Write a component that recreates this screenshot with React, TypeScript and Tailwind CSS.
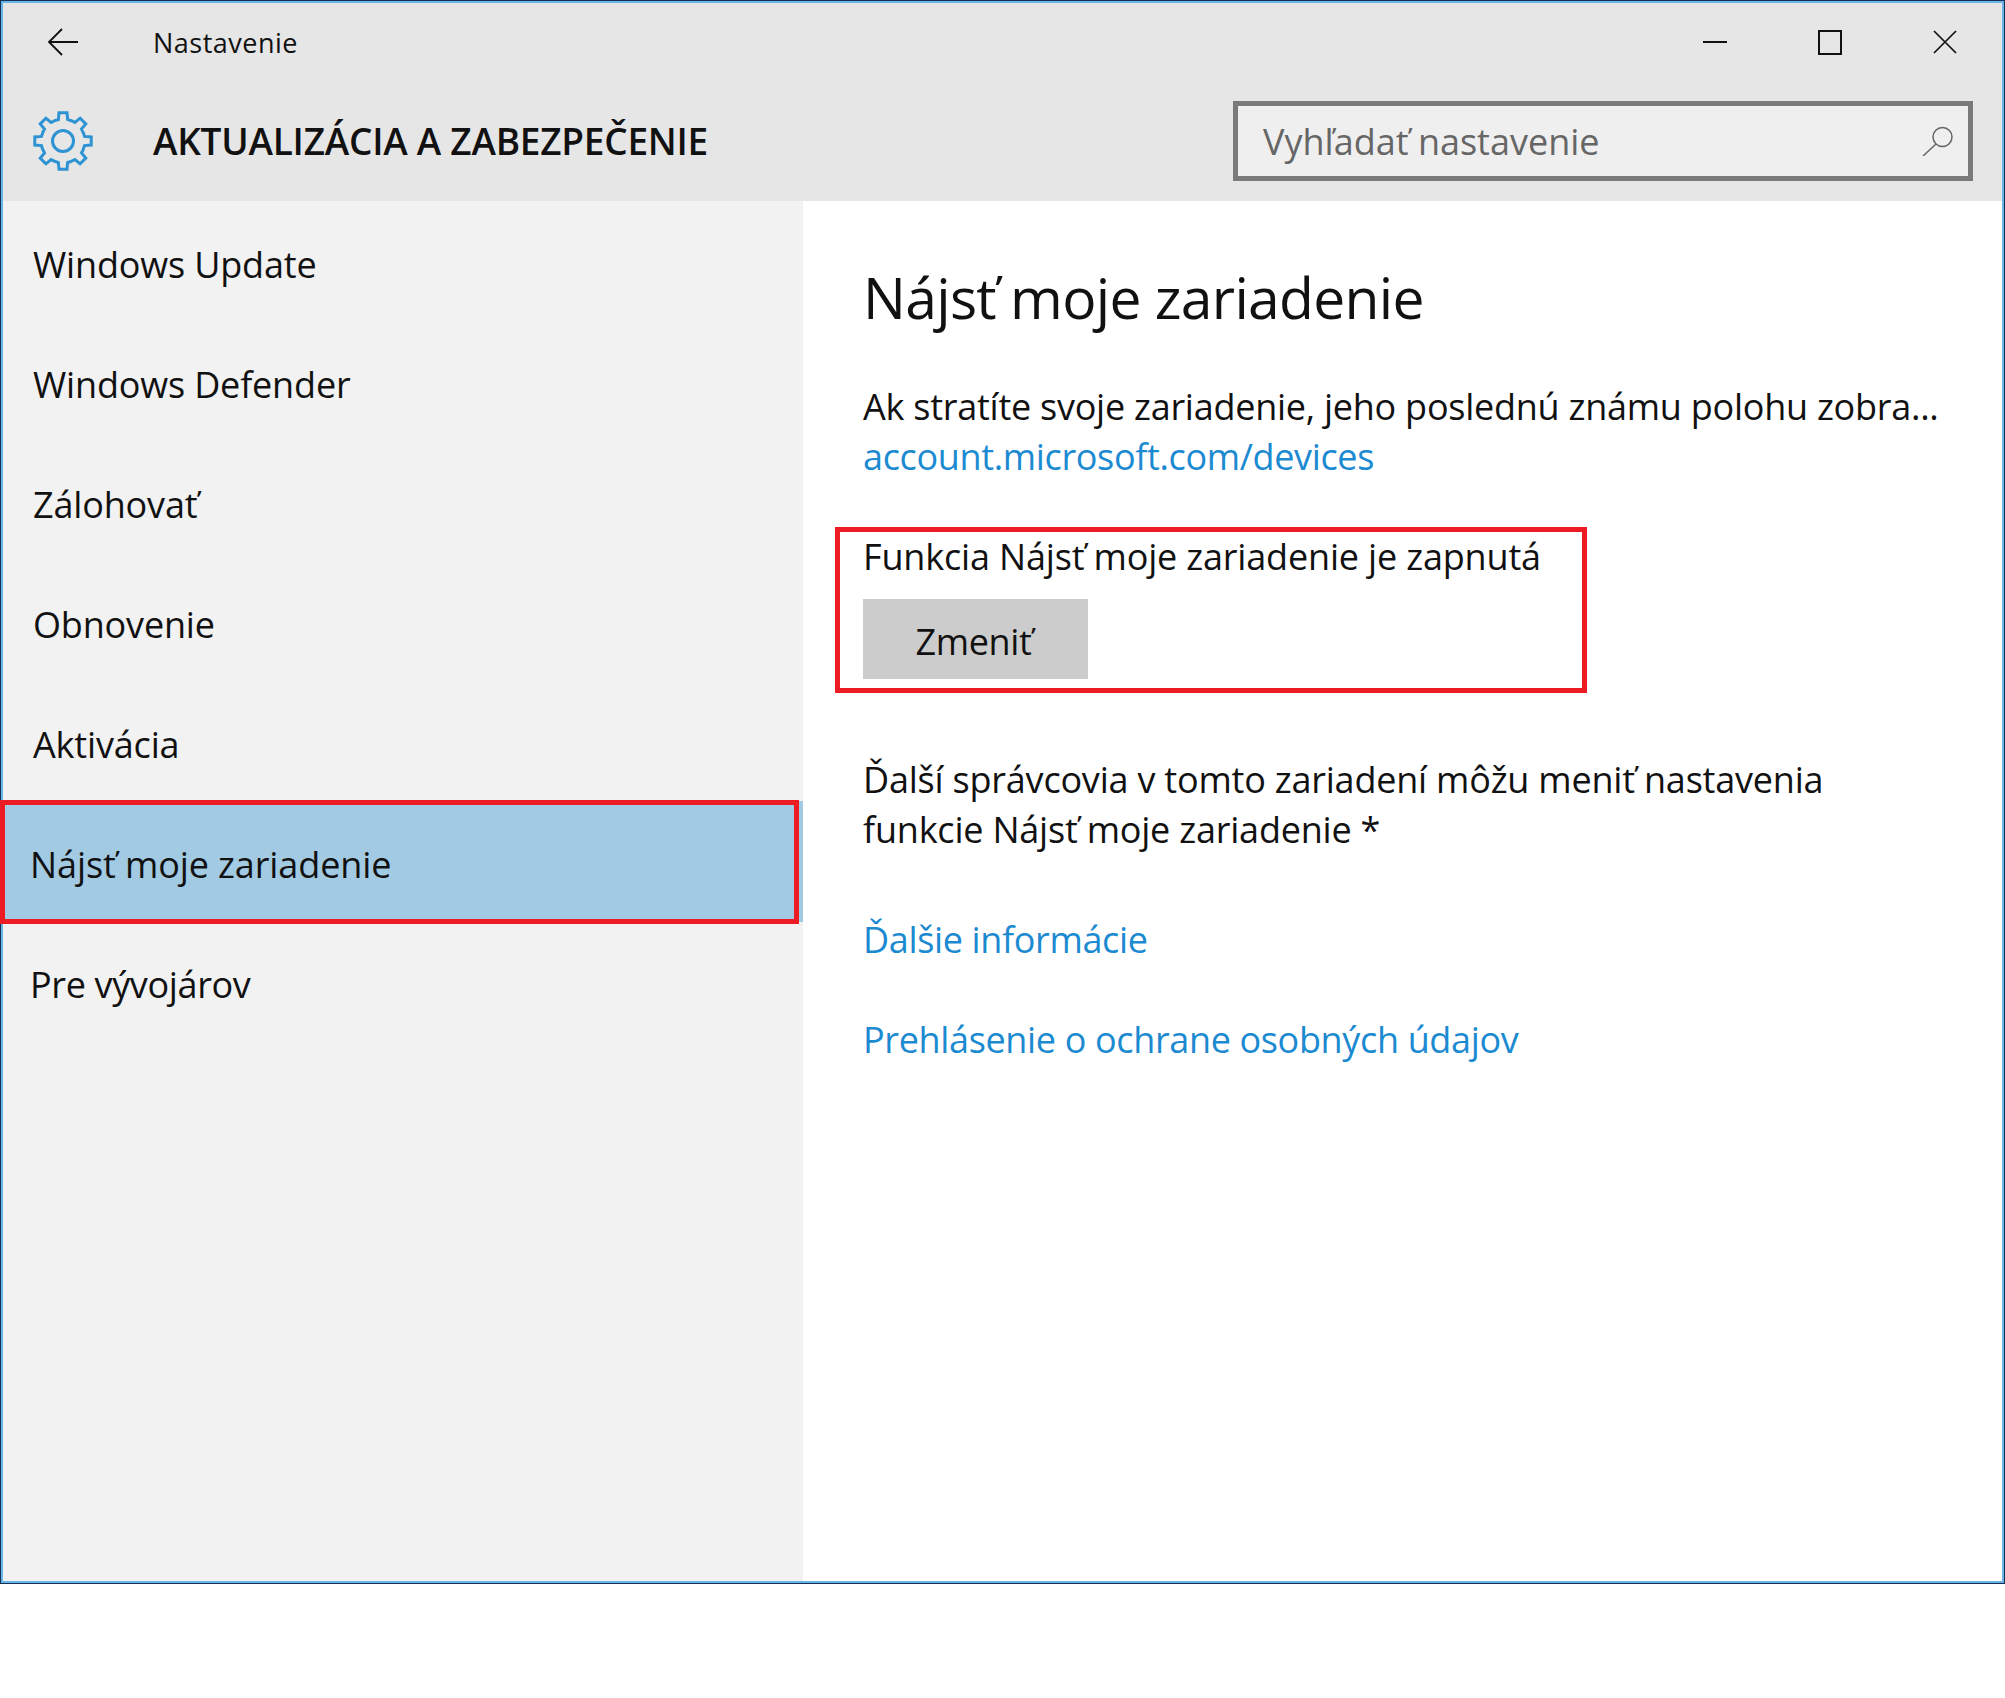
import React from 'react';

const navItems = [
  'Windows Update',
  'Windows Defender',
  'Zálohovať',
  'Obnovenie',
  'Aktivácia',
  'Nájsť moje zariadenie',
  'Pre vývojárov',
];

// 8 tooth settings cog, centred on 30,30
function gearPath() {
  const teeth = 8;
  const pts: string[] = [];
  for (let i = 0; i < teeth; i++) {
    const a = (i * 2 * Math.PI) / teeth - Math.PI / 2;
    const step = (2 * Math.PI) / teeth;
    const corners: [number, number][] = [
      [22, -0.5 * step + 0.06],
      [22, -0.27 * step],
      [28.5, -0.18 * step],
      [28.5, 0.18 * step],
      [22, 0.27 * step],
    ];
    for (const [r, d] of corners) {
      pts.push(`${(30 + r * Math.cos(a + d)).toFixed(2)} ${(30 + r * Math.sin(a + d)).toFixed(2)}`);
    }
  }
  return `M${pts.join('L')}Z`;
}

function GearIcon() {
  return (
    <svg width="60" height="60" viewBox="0 0 60 60" fill="none" stroke="#2d93d3" strokeWidth="3">
      <path d={gearPath()} strokeLinejoin="miter" />
      <circle cx="30" cy="30" r="10.5" />
    </svg>
  );
}

export default function App() {
  return (
    <div className="w-[2005px] h-[1698px] bg-white font-['Open_Sans','Liberation_Sans',sans-serif] text-[#111] [font-kerning:none]">
      <div className="h-[1584px] border border-[#16304f]">
        <div className="h-full border-2 border-[#69b5ea] flex flex-col relative">
          {/* Header */}
          <div className="h-[198px] shrink-0 bg-[#e6e6e6]">
            <div className="h-[80px] flex items-center">
              <div className="w-[150px] pl-[44px] pb-[2px] flex items-center">
                <svg width="32" height="28" viewBox="0 0 32 28" fill="none" stroke="#111" strokeWidth="1.8">
                  <path d="M31 14H2M15 1 2 14l13 13" />
                </svg>
              </div>
              <span className="text-[27px] tracking-[0.5px]">Nastavenie</span>
              <div className="ml-auto flex items-center pb-[2px]">
                <div className="w-[24px] h-[2px] bg-[#111]" />
                <div className="ml-[91px] w-[24px] h-[25px] border-2 border-[#111]" />
                <svg className="ml-[91px] mr-[45px]" width="24" height="24" viewBox="0 0 24 24" stroke="#111" strokeWidth="1.7">
                  <path d="M1 1l22 22M23 1 1 23" />
                </svg>
              </div>
            </div>
            <div className="h-[116px] flex items-center">
              <div className="w-[150px] pl-[30px]">
                <GearIcon />
              </div>
              <h1 className="text-[37px] font-semibold tracking-[-0.24px]">AKTUALIZÁCIA A ZABEZPEČENIE</h1>
              <div className="ml-auto mr-[29px] w-[740px] h-[80px] border-[5px] border-[#7a7a7a] bg-[#efefef] flex items-center justify-between pl-[25px] pr-[14px]">
                <span className="pt-[2px] text-[36px] text-[#666]">Vyhľadať nastavenie</span>
                <svg width="32" height="30" viewBox="0 0 32 30" fill="none" stroke="#666" strokeWidth="1.5">
                  <circle cx="20.5" cy="11" r="9.5" />
                  <path d="M14 18 1 30" />
                </svg>
              </div>
            </div>
          </div>

          <div className="flex-1 flex">
            {/* Sidebar */}
            <nav className="w-[800px] shrink-0 bg-[#f2f2f2]">
              {navItems.map((item, i) => (
                <div
                  key={item}
                  className={
                    i === 5
                      ? 'relative h-[121px] flex items-center pl-[27px] pt-[6px] text-[36px] tracking-[-0.1px] bg-[#a2cae3]'
                      : i === 6
                        ? 'h-[119px] flex items-center pl-[27px] pt-[6px] text-[36px] tracking-[-0.35px]'
                        : 'h-[120px] flex items-center pl-[30px] pt-[8px] text-[36px] tracking-[-0.17px]'
                  }
                >
                  {item}
                  {i === 5 && (
                    <div className="absolute -left-[3px] -top-[1px] w-[799px] h-[124px] border-[5px] border-[#ed1c24]" />
                  )}
                </div>
              ))}
            </nav>

            {/* Content */}
            <main className="flex-1 bg-white pl-[60px] pt-[66px]">
              <h2 className="text-[57px] leading-[60px] tracking-[-0.7px]">Nájsť moje zariadenie</h2>
              <p className="mt-[55px] text-[36px] leading-[50px] tracking-[-0.25px]">
                Ak stratíte svoje zariadenie, jeho poslednú známu polohu zobra...
              </p>
              <p className="text-[36px] leading-[50px] tracking-[-0.35px] text-[#1c8ad1]">account.microsoft.com/devices</p>

              <div className="mt-[45px] -ml-[28px] w-[752px] h-[166px] border-[5px] border-[#ed1c24] pl-[23px]">
                <p className="text-[36px] leading-[50px] tracking-[-0.17px]">Funkcia Nájsť moje zariadenie je zapnutá</p>
                <button className="mt-[17px] w-[225px] h-[80px] bg-[#cccccc] pt-[5px] pr-[4px] text-[36px] tracking-[-0.35px]">Zmeniť</button>
              </div>

              <p className="mt-[62px] text-[36px] leading-[50px] tracking-[-0.21px]">
                Ďalší správcovia v tomto zariadení môžu meniť nastavenia
                <br />
                funkcie Nájsť moje zariadenie *
              </p>
              <p className="mt-[60px] text-[36px] leading-[50px] tracking-[-0.35px] text-[#1c8ad1]">Ďalšie informácie</p>
              <p className="mt-[50px] text-[36px] leading-[50px] tracking-[-0.35px] text-[#1c8ad1]">Prehlásenie o ochrane osobných údajov</p>
            </main>
          </div>
        </div>
      </div>
    </div>
  );
}
